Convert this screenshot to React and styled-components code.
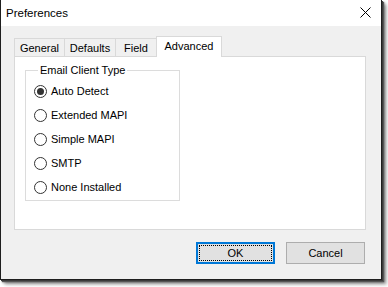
import React from "react";
import styled, { createGlobalStyle } from "styled-components";

const Global = createGlobalStyle`
  html, body { margin: 0; padding: 0; background: #ffffff; }
  body { font-family: "Liberation Sans", Arial, sans-serif; font-size: 11px; color: #000; }
  * { box-sizing: border-box; }
`;

const Page = styled.div`
  width: 388px;
  height: 287px;
  padding: 0;
`;

const Window = styled.div`
  width: 382px;
  height: 280px;
  border: 1px solid #1e1e1e;
  border-top: none;
  background: #f0f0f0;
  display: flex;
  flex-direction: column;
  box-shadow: 1px 1px 0 #3a3a3a, 2px 2px 1px #555, 3px 3px 3px rgba(0,0,0,0.45), 5px 5px 3px rgba(0,0,0,0.2);
`;

const TitleBar = styled.div`
  height: 26px;
  background: #ffffff;
  display: flex;
  align-items: center;
  justify-content: space-between;
  padding: 0 10px 1px 5px;
  font-size: 11.5px;
`;

const CloseButton = styled.div`
  width: 12px;
  height: 12px;
  display: flex;
  align-items: center;
  justify-content: center;
`;

const Content = styled.div`
  flex: 1;
  display: flex;
  flex-direction: column;
  padding: 10px 15px 0 13px;
`;

const TabStrip = styled.div`
  display: flex;
  align-items: flex-end;
  height: 20px;
  position: relative;
  z-index: 1;
`;

const Tab = styled.div`
  width: ${(p) => p.$w}px;
  height: ${(p) => (p.$active ? 21 : 18)}px;
  margin-left: ${(p) => (p.$first ? 0 : -1)}px;
  margin-bottom: ${(p) => (p.$active ? -1 : 0)}px;
  border: 1px solid #d9d9d9;
  border-bottom: none;
  background: ${(p) => (p.$active ? "#ffffff" : "#f0f0f0")};
  display: flex;
  align-items: ${(p) => (p.$active ? "flex-start" : "center")};
  padding-top: ${(p) => (p.$active ? 3 : 0)}px;
  justify-content: center;
  font-size: 11px;
  white-space: nowrap;
`;

const Panel = styled.div`
  width: 352px;
  height: 174px;
  background: #ffffff;
  border: 1px solid #d9d9d9;
  padding: 7px 0 0 10px;
`;

const Group = styled.fieldset`
  width: 155px;
  height: 137px;
  margin: 0;
  border: 1px solid #dcdcdc;
  padding: 3px 0 0 8px;
  display: flex;
  flex-direction: column;
  gap: 0;
`;

const Legend = styled.legend`
  margin-left: 4px;
  padding: 0 2px;
  font-size: 11px;
`;

const RadioRow = styled.div`
  height: 24px;
  display: flex;
  align-items: center;
  gap: 4px;
`;

const RadioCircle = styled.span`
  width: 13px;
  height: 13px;
  border-radius: 50%;
  border: 1px solid #333333;
  background: #ffffff;
  display: flex;
  align-items: center;
  justify-content: center;
  &::after {
    content: "";
    display: ${(p) => (p.$checked ? "block" : "none")};
    width: 7px;
    height: 7px;
    border-radius: 50%;
    background: #333333;
  }
`;

const ButtonRow = styled.div`
  display: flex;
  justify-content: flex-end;
  gap: 11px;
  padding: 12px 1px 0 0;
`;

const Button = styled.div`
  width: 79px;
  height: 22px;
  background: #e1e1e1;
  border: ${(p) => (p.$default ? "2px solid #0078d7" : "1px solid #adadad")};
  padding: ${(p) => (p.$default ? "1px" : "2px")};
  display: flex;
`;

const ButtonFace = styled.div`
  flex: 1;
  display: flex;
  align-items: center;
  justify-content: center;
  border: 1px dotted ${(p) => (p.$focus ? "#000" : "transparent")};
  font-size: 11px;
`;

const options = ["Auto Detect", "Extended MAPI", "Simple MAPI", "SMTP", "None Installed"];
const tabs = [
  { label: "General", w: 51 },
  { label: "Defaults", w: 52 },
  { label: "Field", w: 42 },
  { label: "Advanced", w: 66, active: true },
];

export default function App() {
  return (
    <Page>
      <Global />
      <Window>
        <TitleBar>
          <span>Preferences</span>
          <CloseButton>
            <svg width="11" height="11" viewBox="0 0 11 11">
              <path d="M0.5 0.5 L10.5 10.5 M10.5 0.5 L0.5 10.5" stroke="#000" strokeWidth="1" fill="none" />
            </svg>
          </CloseButton>
        </TitleBar>
        <Content>
          <TabStrip>
            {tabs.map((t, i) => (
              <Tab key={t.label} $w={t.w} $active={t.active} $first={i === 0}>
                {t.label}
              </Tab>
            ))}
          </TabStrip>
          <Panel>
            <Group>
              <Legend>Email Client Type</Legend>
              {options.map((o, i) => (
                <RadioRow key={o}>
                  <RadioCircle $checked={i === 0} />
                  <span>{o}</span>
                </RadioRow>
              ))}
            </Group>
          </Panel>
          <ButtonRow>
            <Button $default>
              <ButtonFace $focus>OK</ButtonFace>
            </Button>
            <Button>
              <ButtonFace>Cancel</ButtonFace>
            </Button>
          </ButtonRow>
        </Content>
      </Window>
    </Page>
  );
}
